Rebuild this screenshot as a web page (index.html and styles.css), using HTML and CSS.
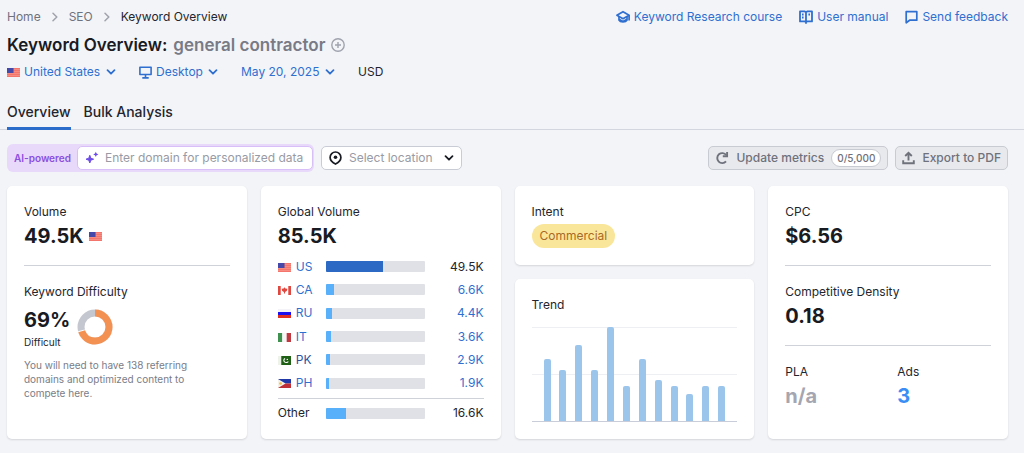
FILE: index.html
```html
<!DOCTYPE html>
<html lang="en">
<head>
    <meta charset="UTF-8">
    <meta name="viewport" content="width=device-width, initial-scale=1.0">
    <title>Keyword Overview: general contractor</title>
    <link rel="stylesheet" href="styles.css">
</head>
<body>
    <!-- Shared symbols -->
    <svg class="symbols" aria-hidden="true">
        <symbol id="chevron" viewBox="0 0 10 10"><path d="M1.5 3.2 5 6.7l3.5-3.5" fill="none" stroke="currentColor" stroke-width="1.8" stroke-linecap="round" stroke-linejoin="round"/></symbol>
        <symbol id="arrow" viewBox="0 0 6 10"><path d="M1 1.2 4.8 5 1 8.8" fill="none" stroke="currentColor" stroke-width="1.5" stroke-linecap="round" stroke-linejoin="round"/></symbol>
        <symbol id="flag-us" viewBox="0 0 12 9" preserveAspectRatio="none"><path fill="#f3756b" d="M0 0h12v9H0z"/><path stroke="#f79a90" stroke-width=".6" d="M6 1.5h6M6 3.5h6M0 5.5h12M0 7.5h12"/><path fill="#4547a9" d="M0 0h6v5H0z"/></symbol>
    </svg>

    <header class="header">
        <div class="top-row">
            <nav class="breadcrumbs" aria-label="Breadcrumbs">
                <a href="#">Home</a>
                <svg width="6" height="10"><use href="#arrow"/></svg>
                <a href="#">SEO</a>
                <svg width="6" height="10"><use href="#arrow"/></svg>
                <span class="current">Keyword Overview</span>
            </nav>
            <div class="help-links">
                <a href="#">
                    <svg width="14" height="14" viewBox="0 0 14 14" fill="none" stroke="currentColor" stroke-width="1.7" stroke-linejoin="round"><path d="M.9 5.2 7 1.7l6.1 3.5L7 8.7z"/><path d="M3 6.6v3.6c1.2 2.4 6.8 2.4 8 0V6.6M13.1 5v5.5M3.4 9.4 7 11.4l3.6-2"/></svg>
                    Keyword Research course
                </a>
                <a href="#">
                    <svg width="14" height="14" viewBox="0 0 14 14" fill="none" stroke="currentColor" stroke-width="1.8" stroke-linejoin="round"><path d="M1 1.4h4.8l1.2.8 1.2-.8H13v10H8.200L7 12.300l-1.200-.900H1zM7 2v11.800"/><path d="M3 4.500h1.600M3 7.500h1.600M9.400 4.500H11"/></svg>
                    User manual
                </a>
                <a href="#">
                    <svg width="13" height="14" viewBox="0 0 13 14" fill="none" stroke="currentColor" stroke-width="1.7" stroke-linejoin="round"><path d="M1.2 1.6h10.6v8.6H4.6l-3.4 2.6z"/></svg>
                    Send feedback
                </a>
            </div>
        </div>

        <h1 class="title">Keyword Overview: <span class="keyword">general contractor</span>
            <button class="add-button" type="button" aria-label="Add keyword">
                <svg width="14" height="14" viewBox="0 0 14 14" fill="none" stroke="currentColor" stroke-width="1.4"><circle cx="7" cy="7" r="6.2"/><path d="M7 4v6M4 7h6"/></svg>
            </button>
        </h1>

        <div class="filters">
            <div class="filter">
                <svg width="13" height="9"><use href="#flag-us"/></svg>
                <select aria-label="Country"><option>United States</option></select>
                <svg class="caret" width="10" height="10"><use href="#chevron"/></svg>
            </div>
            <div class="filter">
                <svg width="13" height="13" viewBox="0 0 13 13" fill="none" stroke="currentColor" stroke-width="1.6"><path d="M.9 1.3h11.2v7.2H.9zM6.5 8.5v3M3.3 11.9h6.4" stroke-linejoin="round"/></svg>
                <select aria-label="Device"><option>Desktop</option></select>
                <svg class="caret" width="10" height="10"><use href="#chevron"/></svg>
            </div>
            <div class="filter">
                <select aria-label="Date"><option>May 20, 2025</option></select>
                <svg class="caret" width="10" height="10"><use href="#chevron"/></svg>
            </div>
            <span>USD</span>
        </div>

        <nav class="tabs" aria-label="Report">
            <a class="tab active" href="#">Overview</a>
            <a class="tab" href="#">Bulk Analysis</a>
        </nav>
    </header>

    <main class="content">
        <div class="toolbar">
            <div class="ai-box">
                <label for="domain">AI-powered</label>
                <div class="ai-field">
                    <svg width="14" height="14" viewBox="0 0 14 14" fill="#6c4be8"><path d="m4.8 4.3 1 2.9 2.8 1-2.8 1-1 2.8-1-2.8-2.8-1 2.8-1z" stroke="#6c4be8" stroke-linejoin="round"/><path d="m10.8.8.8 1.8 1.8.8-1.8.8-.8 1.8-.8-1.8-1.8-.8 1.8-.8z"/></svg>
                    <input id="domain" type="text" placeholder="Enter domain for personalized data">
                </div>
            </div>
            <div class="location">
                <svg width="13" height="14" viewBox="0 0 13 14"><path d="M6.5 1a5.4 5.4 0 0 0-5.4 5.4c0 3 2.4 5 5.4 6.6 3-1.6 5.4-3.6 5.4-6.6A5.4 5.4 0 0 0 6.5 1z" fill="none" stroke="#191b23" stroke-width="1.7"/><circle cx="6.5" cy="6.3" r="1.8" fill="#191b23"/></svg>
                <select aria-label="Location"><option>Select location</option></select>
                <svg class="caret" width="10" height="10"><use href="#chevron"/></svg>
            </div>
            <div class="actions">
                <button class="action" type="button">
                    <svg width="14" height="14" viewBox="0 0 14 14" fill="none" stroke="currentColor" stroke-width="1.9"><path d="M11 10.4A5 5 0 1 1 11.2 4"/><path d="M12.1 1v4.3H7.8"/></svg>
                    Update metrics
                    <span class="counter">0/5,000</span>
                </button>
                <button class="action" type="button">
                    <svg width="13" height="14" viewBox="0 0 13 14" fill="none" stroke="currentColor" stroke-width="1.9"><path d="M6.5 9.5V2.2M3.2 5l3.300-3.200L9.800 5M1.200 9.300v3h10.600v-3"/></svg>
                    Export to PDF
                </button>
            </div>
        </div>

        <div class="cards">
            <section class="card">
                <h2>Volume</h2>
                <div class="value">49.5K <svg width="13" height="9"><use href="#flag-us"/></svg></div>
                <hr>
                <h2>Keyword Difficulty</h2>
                <div class="difficulty">
                    <div>
                        <div class="value">69%</div>
                        <div class="note">Difficult</div>
                    </div>
                    <svg width="36" height="36" viewBox="0 0 36 36" fill="none" stroke-width="7">
                        <circle cx="18" cy="18" r="14" stroke="#c4c7cf"/>
                        <circle cx="18" cy="18" r="14" stroke="#fff" pathLength="100" stroke-dasharray="71 29" transform="rotate(-90 18 18)"/>
                        <circle cx="18" cy="18" r="14" stroke="#f39153" pathLength="100" stroke-dasharray="70 30" transform="rotate(-90 18 18)"/>
                    </svg>
                </div>
                <p class="hint">You will need to have 138 referring domains and optimized content to compete here.</p>
            </section>

            <section class="card">
                <h2>Global Volume</h2>
                <div class="value">85.5K</div>
                <table class="countries">
                    <tbody>
                        <tr>
                            <th scope="row"><svg width="13" height="9"><use href="#flag-us"/></svg><a href="#">US</a></th>
                            <td><div class="bar"><div class="fill dark" style="width: 58%"></div></div></td>
                            <td class="number">49.5K</td>
                        </tr>
                        <tr>
                            <th scope="row"><svg width="13" height="9" viewBox="0 0 12 9" preserveAspectRatio="none"><path fill="#fff" d="M0 0h12v9H0z"/><path fill="#e0483f" d="M0 0h2.500v9H0zM9.500 0H12v9H9.500zM6 1.200l.8 1.300 1.900.3-.6 2.300-1.600.9v1.500h-1V6l-1.600-.900-.6-2.300 1.900-.3z"/></svg><a href="#">CA</a></th>
                            <td><div class="bar"><div class="fill" style="width: 8%"></div></div></td>
                            <td class="number"><a href="#">6.6K</a></td>
                        </tr>
                        <tr>
                            <th scope="row"><svg width="13" height="9" viewBox="0 0 12 9" preserveAspectRatio="none"><path fill="#f4f4f8" d="M0 0h12v3H0z"/><path fill="#1b10f0" d="M0 3h12v3H0z"/><path fill="#e03024" d="M0 6h12v3H0z"/></svg><a href="#">RU</a></th>
                            <td><div class="bar"><div class="fill" style="width: 6%"></div></div></td>
                            <td class="number"><a href="#">4.4K</a></td>
                        </tr>
                        <tr>
                            <th scope="row"><svg width="13" height="9" viewBox="0 0 12 9" preserveAspectRatio="none"><path fill="#3f9150" d="M0 0h4v9H0z"/><path fill="#f6f6f6" d="M4 0h4v9H4z"/><path fill="#bf3a40" d="M8 0h4v9H8z"/></svg><a href="#">IT</a></th>
                            <td><div class="bar"><div class="fill" style="width: 5%"></div></div></td>
                            <td class="number"><a href="#">3.6K</a></td>
                        </tr>
                        <tr>
                            <th scope="row"><svg width="13" height="9" viewBox="0 0 12 9" preserveAspectRatio="none"><path fill="#eef3ea" d="M0 0h3v9H0z"/><path fill="#1f5f16" d="M3 0h9v9H3z"/><path fill="none" stroke="#fff" d="M6.5 2.5a2.2 2.2 0 1 0 3 3"/><circle cx="8.6" cy="3.4" r=".7" fill="#fff"/></svg><a class="visited" href="#">PK</a></th>
                            <td><div class="bar"><div class="fill" style="width: 4%"></div></div></td>
                            <td class="number"><a href="#">2.9K</a></td>
                        </tr>
                        <tr>
                            <th scope="row"><svg width="13" height="9" viewBox="0 0 12 9" preserveAspectRatio="none"><path fill="#2038a8" d="M0 0h12v4.5H0z"/><path fill="#c02f35" d="M0 4.5h12V9H0z"/><path fill="#f4f1ea" d="m0 0 7 4.5L0 9z"/><circle cx="2.3" cy="4.5" r="1.3" fill="#f2c14a"/></svg><a href="#">PH</a></th>
                            <td><div class="bar"><div class="fill" style="width: 3%"></div></div></td>
                            <td class="number"><a href="#">1.9K</a></td>
                        </tr>
                    </tbody>
                    <tfoot>
                        <tr>
                            <th scope="row">Other</th>
                            <td><div class="bar"><div class="fill" style="width: 20%"></div></div></td>
                            <td class="number">16.6K</td>
                        </tr>
                    </tfoot>
                </table>
            </section>

            <div class="column">
                <section class="card">
                    <h2>Intent</h2>
                    <span class="tag">Commercial</span>
                </section>
                <section class="card trend">
                    <h2>Trend</h2>
                    <div class="chart">
                        <div style="height: 66%"></div>
                        <div style="height: 54%"></div>
                        <div style="height: 81%"></div>
                        <div style="height: 54%"></div>
                        <div style="height: 100%"></div>
                        <div style="height: 37%"></div>
                        <div style="height: 66%"></div>
                        <div style="height: 44%"></div>
                        <div style="height: 37%"></div>
                        <div style="height: 29%"></div>
                        <div style="height: 37%"></div>
                        <div style="height: 37%"></div>
                    </div>
                </section>
            </div>

            <section class="card">
                <h2>CPC</h2>
                <div class="value">$6.56</div>
                <hr>
                <h2>Competitive Density</h2>
                <div class="value">0.18</div>
                <hr>
                <div class="split">
                    <div>
                        <h2>PLA</h2>
                        <div class="value muted">n/a</div>
                    </div>
                    <div>
                        <h2>Ads</h2>
                        <div class="value"><a class="ads" href="#">3</a></div>
                    </div>
                </div>
            </section>
        </div>
    </main>
</body>
</html>
```
FILE: styles.css
```css
* {
    box-sizing: border-box;
}
body {
    margin: 0;
    background-color: #f3f4f8;
    color: #23252e;
    font-family: Inter, "Liberation Sans", sans-serif;
    font-size: 12px;
    line-height: 18px;
}
a {
    color: #2f6fd0;
    text-decoration: none;
}
svg {
    flex: none;
}
button, select, input {
    font: inherit;
    color: inherit;
}
h1, h2, p {
    margin: 0;
}
.symbols {
    display: none;
}

/* Header */
.header {
    padding: 8px 16px 0 7px;
    border-bottom: 1px solid #d3d6de;
}
.top-row, .breadcrumbs, .help-links, .help-links a, .filters, .filter {
    display: flex;
    align-items: center;
}
.top-row {
    justify-content: space-between;
}
.breadcrumbs {
    gap: 11px;
    color: #a0a3ad;
}
.breadcrumbs a {
    color: #6f727c;
}
.breadcrumbs .current {
    color: #23252e;
}
.help-links {
    gap: 17px;
}
.help-links a {
    gap: 4px;
}
.title {
    display: flex;
    align-items: center;
    gap: 6px;
    margin-top: 7px;
    font-size: 17px;
    line-height: 24px;
    font-weight: 600;
    color: #191b23;
}
.keyword {
    color: #787b86;
}
.add-button {
    display: flex;
    padding: 0;
    border: none;
    background: none;
    color: #a0a3ad;
    cursor: pointer;
}
.filters {
    gap: 23px;
    margin-top: 6px;
}
.filter {
    gap: 4px;
    color: #2f6fd0;
}
select {
    appearance: none;
    padding: 0 15px 0 0;
    border: none;
    background: none;
    cursor: pointer;
}
/* The caret sits in the select's right padding */
.caret {
    margin-left: -14px;
    pointer-events: none;
}
.tabs {
    display: flex;
    gap: 13px;
    margin-top: 21px;
    margin-bottom: -1px;
}
.tab {
    padding-bottom: 5px;
    border-bottom: 3px solid transparent;
    font-size: 14px;
    line-height: 20px;
    font-weight: 500;
    color: #23252e;
}
.tab.active {
    border-bottom-color: #2b6bc9;
}

/* Toolbar */
.content {
    padding: 14px 16px 14px 7px;
}
.toolbar {
    display: flex;
    align-items: center;
    gap: 7px;
    margin-bottom: 14px;
}
.ai-box {
    display: flex;
    align-items: center;
    gap: 6px;
    padding: 2px 1px 2px 7px;
    border-radius: 6px;
    background-color: #e8d9fb;
}
.ai-box label {
    font-size: 10px;
    font-weight: 600;
    color: #8b4fe0;
}
.ai-field, .location {
    display: flex;
    align-items: center;
    height: 24px;
    padding: 0 7px;
    border: 1px solid #d9bff8;
    border-radius: 5px;
    background-color: #fff;
}
.ai-field {
    gap: 6px;
}
.ai-field input {
    width: 200px;
    padding: 0;
    border: none;
    outline: none;
    background: none;
}
.ai-field input::placeholder {
    color: #989ba5;
    opacity: 1;
}
.location {
    gap: 7px;
    border-color: #c9ccd5;
    color: #191b23;
}
.location select {
    padding-right: 18px;
    color: #989ba5;
}
.actions {
    display: flex;
    gap: 7px;
    margin-left: auto;
}
.action {
    display: flex;
    align-items: center;
    gap: 7px;
    height: 24px;
    padding: 0 6px;
    border: 1px solid #c9cbd2;
    border-radius: 5px;
    background-color: #e8e9ed;
    font-weight: 500;
    color: #6f717b;
    cursor: pointer;
}
.counter {
    padding: 0 5px;
    border: 1px solid #c9cbd2;
    border-radius: 9px;
    background-color: #fff;
    font-size: 10px;
    line-height: 16px;
}

/* Cards */
.cards {
    display: grid;
    grid-template-columns: repeat(4, 1fr);
    gap: 14px;
}
.card {
    padding: 17px;
    border-radius: 5px;
    background-color: #fff;
    box-shadow: 0 1px 2px rgba(25, 27, 35, 0.14);
}
.card h2 {
    font-size: 12px;
    line-height: 18px;
    font-weight: 400;
}
.value {
    display: flex;
    align-items: center;
    gap: 5px;
    font-size: 20px;
    line-height: 30px;
    font-weight: 700;
    color: #191b23;
}
.card hr {
    height: 1px;
    margin: 14px 0 17px;
    border: none;
    background-color: #d0d2da;
}
.difficulty {
    display: flex;
    align-items: center;
    gap: 7px;
    margin-top: 4px;
}
.note {
    font-size: 10px;
    line-height: 14px;
}
.hint {
    margin-top: 9px;
    padding-right: 14%;
    font-size: 10px;
    line-height: 14px;
    color: #7a7d87;
}
.countries {
    width: 100%;
    margin-top: 4px;
    border-spacing: 0;
}
.countries th, .countries td {
    height: 23px;
    padding: 0;
    font-weight: 400;
    text-align: left;
}
.countries th {
    width: 48px;
}
.countries th svg {
    margin-right: 5px;
    vertical-align: -1px;
}
.countries .number {
    width: 59px;
    text-align: right;
}
.countries .visited {
    color: #2f4f9f;
}
.countries tbody tr:nth-child(3) > * {
    height: 24px;
}
.countries tbody tr:last-child > * {
    height: 27px;
    padding-bottom: 3px;
}
.countries tfoot th, .countries tfoot td {
    height: 24px;
    padding-top: 5px;
    border-top: 1px solid #d0d2da;
}
.bar {
    height: 11px;
    border-radius: 1px;
    overflow: hidden;
    background-color: #e0e1e7;
}
.fill {
    height: 100%;
    background-color: #59b0fa;
}
.fill.dark {
    background-color: #2b69c4;
}
.column {
    display: flex;
    flex-direction: column;
    gap: 14px;
}
.tag {
    display: inline-block;
    margin-top: 3px;
    padding: 0 8px;
    border-radius: 12px;
    background-color: #fae69a;
    line-height: 24px;
    color: #a86a25;
}
.trend {
    flex: 1;
}
.chart {
    display: flex;
    align-items: flex-end;
    justify-content: space-between;
    height: 95px;
    margin-top: 13px;
    padding: 0 12px;
    border-bottom: 1px solid #c9ccd9;
    background: linear-gradient(#eeeff3, #eeeff3) 0 0 / 100% 1px no-repeat, linear-gradient(#eeeff3, #eeeff3) 0 50% / 100% 1px no-repeat;
}
.chart div {
    width: 7px;
    border-radius: 2px 2px 0 0;
    background-color: #9cc5ec;
}
.split {
    display: grid;
    grid-template-columns: 112px 1fr;
}
.muted {
    color: #a4a6b1;
}
.ads {
    color: #3a8df5;
}
```
